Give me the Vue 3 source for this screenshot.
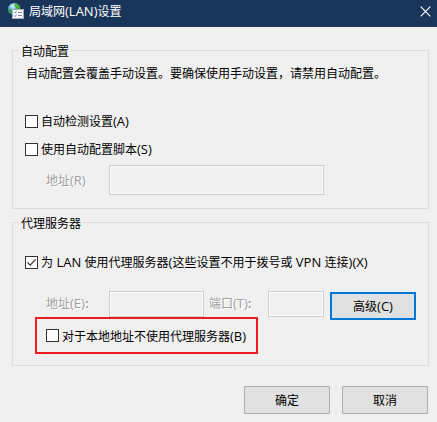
<script setup>
import { ref } from 'vue'

const autoDetect = ref(false)
const useScript = ref(false)
const useProxy = ref(true)
const bypassLocal = ref(false)
</script>

<template>
  <main class="dialog">
    <header class="titlebar">
      <svg class="app-icon" width="18" height="18" viewBox="0 0 18 18">
        <defs>
          <radialGradient id="globe" cx="40%" cy="25%" r="80%">
            <stop offset="0" stop-color="#d4f3fb" />
            <stop offset=".45" stop-color="#5badd9" />
            <stop offset="1" stop-color="#164f96" />
          </radialGradient>
        </defs>
        <circle cx="7.2" cy="7.2" r="6.2" fill="url(#globe)" />
        <path d="M8 1.5 10 1.6 12.6 4 13 8H10L9 5.5 7.5 4Z" fill="#49b52c" />
        <path d="M1.4 6 4 7.2 5 10 4.5 12.5 2 10.5Z" fill="#3b9b55" />
        <rect x="5.5" y="7.5" width="11" height="9" fill="#f5f6f6" stroke="#a5abb0" />
        <path d="M7.3 10l.8.8 1.4-1.8M7.3 13.7l.8.8 1.4-1.8" fill="none" stroke="#3b86bd" />
        <path d="M11 10.5h4M11 13.5h4" stroke="#7c8994" />
      </svg>
      <h1 class="title">局域网<span class="lat">(LAN)</span>设置</h1>
      <svg class="close" width="11" height="11" viewBox="0 0 11 11">
        <path d="M.7.7 10.3 10.3M10.3.7.7 10.3" stroke="#fff" stroke-width="1.15" />
      </svg>
    </header>

    <section class="group auto">
      <h2 class="legend">自动配置</h2>
      <p class="note">自动配置会覆盖手动设置。要确保使用手动设置，请禁用自动配置。</p>
      <label class="check detect">
        <input v-model="autoDetect" type="checkbox" class="box" />
        <span class="caption">自动检测设置<span class="lat">(A)</span></span>
      </label>
      <label class="check script">
        <input v-model="useScript" type="checkbox" class="box" />
        <span class="caption">使用自动配置脚本<span class="lat">(S)</span></span>
      </label>
      <div class="fields script-fields">
        <span class="disabled address">地址<span class="lat">(R)</span></span>
        <input class="field wide" disabled />
      </div>
    </section>

    <section class="group proxy">
      <h2 class="legend">代理服务器</h2>
      <label class="check use-proxy">
        <input v-model="useProxy" type="checkbox" class="box" />
        <svg v-if="useProxy" class="tick" width="13" height="13" viewBox="0 0 13 13">
          <path d="M2.5 6.4 5.2 9.1 10.6 3.4" fill="none" stroke="#333" stroke-width="1.3" />
        </svg>
        <span class="caption">为<span class="lat"> LAN </span>使用代理服务器<span class="lat">(</span>这些设置不用于拨号或<span class="lat"> VPN </span>连接<span class="lat">)(X)</span></span>
      </label>
      <div class="fields proxy-fields">
        <span class="disabled address">地址<span class="lat">(E)<b>:</b></span></span>
        <input class="field host" disabled />
        <span class="disabled port-label">端口<span class="lat">(T)<b>:</b></span></span>
        <input class="field port" disabled />
        <button class="button advanced">高级<span class="lat">(C)</span></button>
      </div>
      <div class="highlight">
        <label class="check">
          <input v-model="bypassLocal" type="checkbox" class="box" />
          <span class="caption">对于本地地址不使用代理服务器<span class="lat">(B)</span></span>
        </label>
      </div>
    </section>

    <footer class="actions">
      <button class="button">确定</button>
      <button class="button">取消</button>
    </footer>
  </main>
</template>

<style>
body {
  background: #f0f0f0;
}
</style>

<style scoped>
.dialog {
  box-sizing: border-box;
  width: 437px;
  height: 422px;
  background: #f0f0f0;
  color: #000;
  font: 12px/16px "Noto Sans CJK SC", sans-serif;
  white-space: nowrap;
}
.dialog * {
  box-sizing: border-box;
}
.lat {
  font-family: "Open Sans", sans-serif;
  font-size: 13px;
  line-height: 1;
  white-space: pre;
}
.titlebar {
  display: flex;
  align-items: flex-start;
  height: 27px;
  padding: 2px 6px 0 7px;
  background: #19355a;
  color: #fff;
}
.title {
  flex: 1;
  margin: 1px 0 0 4px;
  font: inherit;
}
.close {
  margin-top: 4px;
}
.group {
  display: flex;
  flex-direction: column;
  margin: 0 8px 0 12px;
  border: 1px solid #dcdcdc;
}
.auto {
  height: 159px;
  margin-top: 23px;
}
.proxy {
  height: 144px;
  margin-top: 13px;
}
.legend {
  align-self: flex-start;
  height: 16px;
  margin: -8px 0 0 6px;
  padding: 0 2px;
  background: #f0f0f0;
  font: inherit;
}
.note {
  margin: 6px 0 1px 13px;
}
.check {
  display: flex;
  align-items: center;
  gap: 3px;
  height: 16px;
}
.box {
  flex: none;
  appearance: none;
  width: 13px;
  height: 13px;
  margin: 0;
  border: 1px solid #333;
  background: #fff;
}
.tick {
  flex: none;
  margin-left: -16px;
}
.detect {
  margin: 31px 0 0 12px;
}
.script {
  margin: 12px 0 0 12px;
}
.use-proxy {
  margin: 23px 0 0 12px;
}
.fields {
  display: flex;
  padding-left: 33px;
}
.script-fields {
  align-items: center;
  margin-top: 8px;
}
.proxy-fields {
  height: 26px;
  margin-top: 21px;
}
.disabled {
  color: #a0a0a0;
  text-shadow: 1px 1px #fff;
}
.address {
  width: 63px;
}
.proxy-fields .disabled {
  margin-top: 4px;
}
.field {
  padding: 0;
  border: 1px solid #ccc;
  background: #f0f0f0;
  box-shadow: inset 0 0 0 1px #fff;
}
.wide {
  width: 215px;
  height: 30px;
}
.host {
  width: 95px;
  height: 26px;
}
.port-label {
  width: 64px;
  padding-left: 5px;
}
.port {
  width: 56px;
  height: 26px;
}
.button {
  width: 86px;
  height: 28px;
  padding: 0 0 1px;
  border: 1px solid #adadad;
  background: #e1e1e1;
  color: #000;
  font: inherit;
}
.advanced {
  margin: 1px 0 0 6px;
  border: 2px solid #0078d7;
}
.highlight {
  display: flex;
  align-items: center;
  width: 223px;
  height: 37px;
  margin-left: 22px;
  padding-left: 9px;
  border: 2px solid #ed1c24;
}
.actions {
  display: flex;
  justify-content: flex-end;
  gap: 12px;
  padding: 20px 9px 0 0;
}
</style>
